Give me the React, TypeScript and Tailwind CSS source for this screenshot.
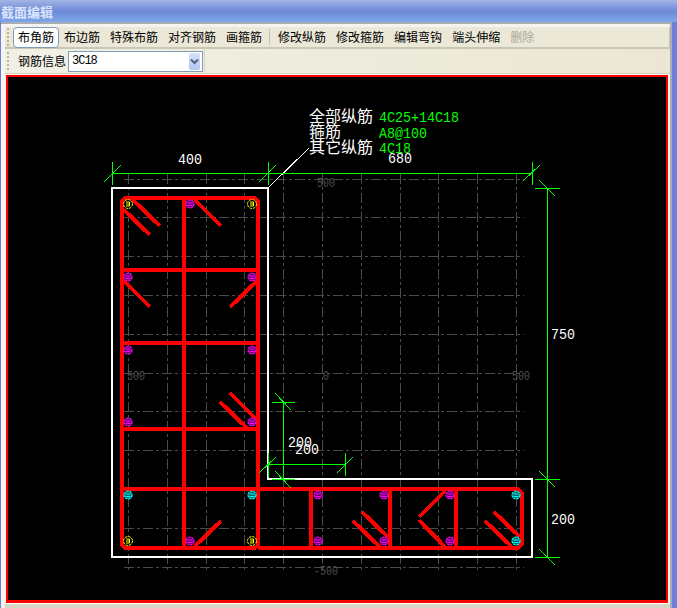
const tools = ["布角筋", "布边筋", "特殊布筋", "对齐钢筋", "画箍筋"];
const editTools = ["修改纵筋", "修改箍筋", "编辑弯钩", "端头伸缩"];

const gridX = [128, 167, 206, 244, 283, 322, 361, 400, 438, 477, 516];
const gridY = [179, 217, 256, 295, 334, 373, 411, 450, 489, 528, 567];

// x1 y1 x2 y2 in page coordinates, the svg viewBox starts where the canvas starts
const stirrups = [
  "M122 201 L125 198 L255 198 L258 201 L258 545 L255 548 L125 548 L122 545 Z",
  "M258 489 L518 489 L522 493 L522 544 L518 548 L258 548",
  "M184 198 L184 548",
  "M122 270 L256 270",
  "M122 343 L256 343",
  "M122 429 L256 429",
  "M122 489 L258 489",
  "M311 489 L311 548",
  "M390 489 L390 548",
  "M456 489 L456 548",
];

const hooks = [
  [133, 200, 160, 226],
  [124, 210, 150, 235],
  [195, 200, 221, 226],
  [124, 281, 150, 307],
  [257, 281, 230, 307],
  [220, 402, 247, 428],
  [230, 393, 258, 421],
  [221, 521, 194, 547],
  [353, 521, 380, 547],
  [362, 512, 388, 537],
  [445, 491, 419, 517],
  [419, 520, 445, 547],
  [485, 521, 512, 547],
  [494, 512, 520, 537],
];

const yellowBars = [[128, 204], [252, 204], [128, 541], [252, 541]];
const magentaBars = [
  [190, 204], [128, 277], [252, 277], [128, 350], [252, 350], [128, 422], [252, 422],
  [190, 541], [318, 495], [318, 541], [384, 495], [384, 541], [450, 495], [450, 541],
];
const cyanBars = [[128, 495], [252, 495], [516, 495], [516, 541]];

const dimLines = [
  [112, 173, 532, 173],
  [112, 162, 112, 185],
  [104, 182, 121, 165],
  [268, 162, 268, 185],
  [259, 182, 276, 165],
  [532, 162, 532, 185],
  [523, 181, 540, 165],
  [547, 188, 547, 557],
  [535, 188, 560, 188],
  [539, 180, 555, 196],
  [535, 479, 560, 479],
  [539, 471, 555, 487],
  [535, 557, 560, 557],
  [539, 549, 555, 565],
  [283, 402, 283, 479],
  [272, 402, 295, 402],
  [275, 393, 291, 410],
  [272, 479, 295, 479],
  [275, 471, 291, 488],
  [268, 464, 345, 464],
  [268, 453, 268, 477],
  [259, 473, 276, 457],
  [345, 453, 345, 476],
  [337, 473, 353, 457],
];

const whiteNumbers = [
  ["400", 178, 164],
  ["680", 388, 163],
  ["750", 551, 339],
  ["200", 288, 447],
  ["200", 295, 454],
  ["200", 551, 524],
];

const greenNumbers = [
  ["4C25+14C18", 379, 122],
  ["A8@100", 379, 138],
  ["4C18", 379, 153],
];

const greyNumbers = [
  ["500", 317, 187],
  ["500", 127, 380],
  ["0", 323, 380],
  ["500", 512, 380],
  ["-500", 314, 575],
];

const Grip = () => (
  <div className="flex flex-col gap-[2px] w-[2px] mr-[4px]">
    {[0, 1, 2, 3, 4].map((i) => (
      <span key={i} className="block w-[2px] h-[2px] bg-[#b5b2a2]" />
    ))}
  </div>
);

const ToolButton = ({ label, active, disabled }: { label: string; active?: boolean; disabled?: boolean }) => (
  <button
    className={
      active
        ? "h-[21px] px-[4px] border border-[#7f9db9] rounded-[4px] bg-white text-black leading-none"
        : disabled
          ? "h-[21px] px-[5px] text-[#aca899] leading-none"
          : "h-[21px] px-[5px] text-black leading-none"
    }
  >
    {label}
  </button>
);

const Bar = ({ x, y, color }: { x: number; y: number; color: string }) => (
  <g shapeRendering="geometricPrecision">
    <circle cx={x} cy={y} r={4} fill="#000000" />
    <circle cx={x} cy={y} r={4} fill={color} fillOpacity={0.4} stroke={color} strokeWidth={1.2} strokeDasharray="2.5 0.8" />
    <path d={`M${x - 2.5} ${y - 1} H${x + 2.5} M${x - 2.5} ${y + 1.5} H${x + 2.5}`} stroke={color} strokeWidth={1} />
  </g>
);

const YellowBar = ({ x, y }: { x: number; y: number }) => (
  <g shapeRendering="geometricPrecision">
    <circle cx={x} cy={y} r={4.5} fill="#000000" stroke="#ffff00" strokeWidth={1} strokeDasharray="2.5 1" />
    <path d={`M${x - 2} ${y - 2} H${x + 1.5} V${y + 2} H${x - 2} M${x - 2} ${y} H${x + 1.5}`} fill="none" stroke="#ffff00" strokeWidth={1} />
  </g>
);

const Section = () => (
  <svg viewBox="8 77 658 523" className="block w-[658px] h-[523px]" shapeRendering="crispEdges">
    {gridX.map((x) => (
      <line key={x} x1={x} y1={174} x2={x} y2={572} stroke="#4a4a4a" strokeDasharray="10 3 3 3" />
    ))}
    {gridY.map((y) => (
      <line key={y} x1={124} y1={y} x2={524} y2={y} stroke="#4a4a4a" strokeDasharray="10 3 3 3" />
    ))}

    {greyNumbers.map(([t, x, y], i) => (
      <text
        key={i}
        x={x}
        y={y}
        fill="#4f4f4f"
        fontSize={12}
        textLength={String(t).length * 6}
        lengthAdjust="spacingAndGlyphs"
        className="font-['Liberation_Mono',monospace]"
      >
        {t}
      </text>
    ))}

    <path d="M112 188 H268 V479 H532 V557 H112 Z" fill="none" stroke="#ffffff" strokeWidth={2} />
    <line x1={268} y1={188} x2={309} y2={148} stroke="#ffffff" />

    {stirrups.map((d) => (
      <path key={d} d={d} fill="none" stroke="#ff0000" strokeWidth={4} />
    ))}
    {hooks.map(([x1, y1, x2, y2], i) => (
      <line key={i} x1={x1} y1={y1} x2={x2} y2={y2} stroke="#ff0000" strokeWidth={4} />
    ))}

    {yellowBars.map(([x, y]) => (
      <YellowBar key={`${x}-${y}`} x={x} y={y} />
    ))}
    {magentaBars.map(([x, y]) => (
      <Bar key={`${x}-${y}`} x={x} y={y} color="#ff00ff" />
    ))}
    {cyanBars.map(([x, y]) => (
      <Bar key={`${x}-${y}`} x={x} y={y} color="#00ffff" />
    ))}

    {dimLines.map(([x1, y1, x2, y2], i) => (
      <line key={i} x1={x1} y1={y1} x2={x2} y2={y2} stroke="#00ff00" />
    ))}

    {whiteNumbers.map(([t, x, y], i) => (
      <text
        key={i}
        x={x}
        y={y}
        fill="#ffffff"
        fontSize={15}
        textLength={24}
        lengthAdjust="spacingAndGlyphs"
        className="font-['Liberation_Mono',monospace]"
      >
        {t}
      </text>
    ))}
    {greenNumbers.map(([t, x, y], i) => (
      <text
        key={i}
        x={x}
        y={y}
        fill="#00ff00"
        fontSize={15}
        textLength={String(t).length * 8}
        lengthAdjust="spacingAndGlyphs"
        className="font-['Liberation_Mono',monospace]"
      >
        {t}
      </text>
    ))}

    <g fill="#ffffff" fontSize={16} className="font-['Noto_Sans_CJK_SC',sans-serif]">
      <text x={309} y={122}>全部纵筋</text>
      <text x={309} y={137}>箍筋</text>
      <text x={309} y={153}>其它纵筋</text>
    </g>
  </svg>
);

export default function App() {
  return (
    <div className="w-[677px] h-[608px] flex flex-col overflow-hidden bg-[#6f7fd8] font-['Noto_Sans_CJK_SC',sans-serif]">
      <div className="h-[22px] shrink-0 flex items-center pl-[1px] bg-gradient-to-b from-[#a3b5e6] via-[#6e8ad8] to-[#7ca6ea]">
        <span className="text-[13px] font-bold leading-none text-[#dbe5fa]">截面编辑</span>
      </div>

      <div className="flex-1 min-h-0 ml-[1px] mr-[5px] border-t-2 border-r-2 border-[#a9aeb6] bg-[#f5f4ee] pt-[3px] pl-[4px] flex flex-col text-xs">
        <div className="h-[22px] shrink-0 flex items-center pl-[2px] bg-[#ebe8d8] border-b-2 border-r border-[#c9c6b6]">
          <Grip />
          <div className="flex items-center">
            {tools.map((t, i) => (
              <ToolButton key={t} label={t} active={i === 0} />
            ))}
            <span className="w-px h-[16px] ml-[2px] mr-[3px] bg-[#c5c2b2]" />
            {editTools.map((t) => (
              <ToolButton key={t} label={t} />
            ))}
            <ToolButton label="删除" disabled />
          </div>
        </div>

        <div className="h-[25px] shrink-0 flex bg-gradient-to-r from-[#f1f0e6] to-[#ebe7d3] border-b border-[#d6d3c3]">
          <div className="w-[200px] flex items-center pl-[2px] border-r border-[#d6d3c3]">
            <Grip />
            <span className="ml-[5px] mr-[2px] text-black">钢筋信息</span>
            <div className="w-[135px] h-[21px] shrink-0 flex items-center justify-between pl-[3px] pr-[2px] border border-[#7f9db9] bg-white">
              <span className="font-['Liberation_Mono',monospace] text-xs tracking-[-1px] text-black">3C18</span>
              <span className="w-[11px] h-[17px] flex items-center justify-center rounded-[2px] bg-gradient-to-b from-[#d6e2fb] to-[#b0c6f3]">
                <svg width="9" height="7" viewBox="0 0 9 7">
                  <path d="M1 1.5 L4.5 5 L8 1.5" fill="none" stroke="#4d6185" strokeWidth="2" />
                </svg>
              </span>
            </div>
          </div>
        </div>

        <div className="mt-px ml-px w-[662px] h-[528px] shrink-0 border-x-2 border-t-2 border-b-[3px] border-[#ff0000] bg-black">
          <Section />
        </div>
        <div className="h-px shrink-0 bg-white" />
        <div className="flex-1 bg-[#d9d6c6]" />
      </div>
    </div>
  );
}
